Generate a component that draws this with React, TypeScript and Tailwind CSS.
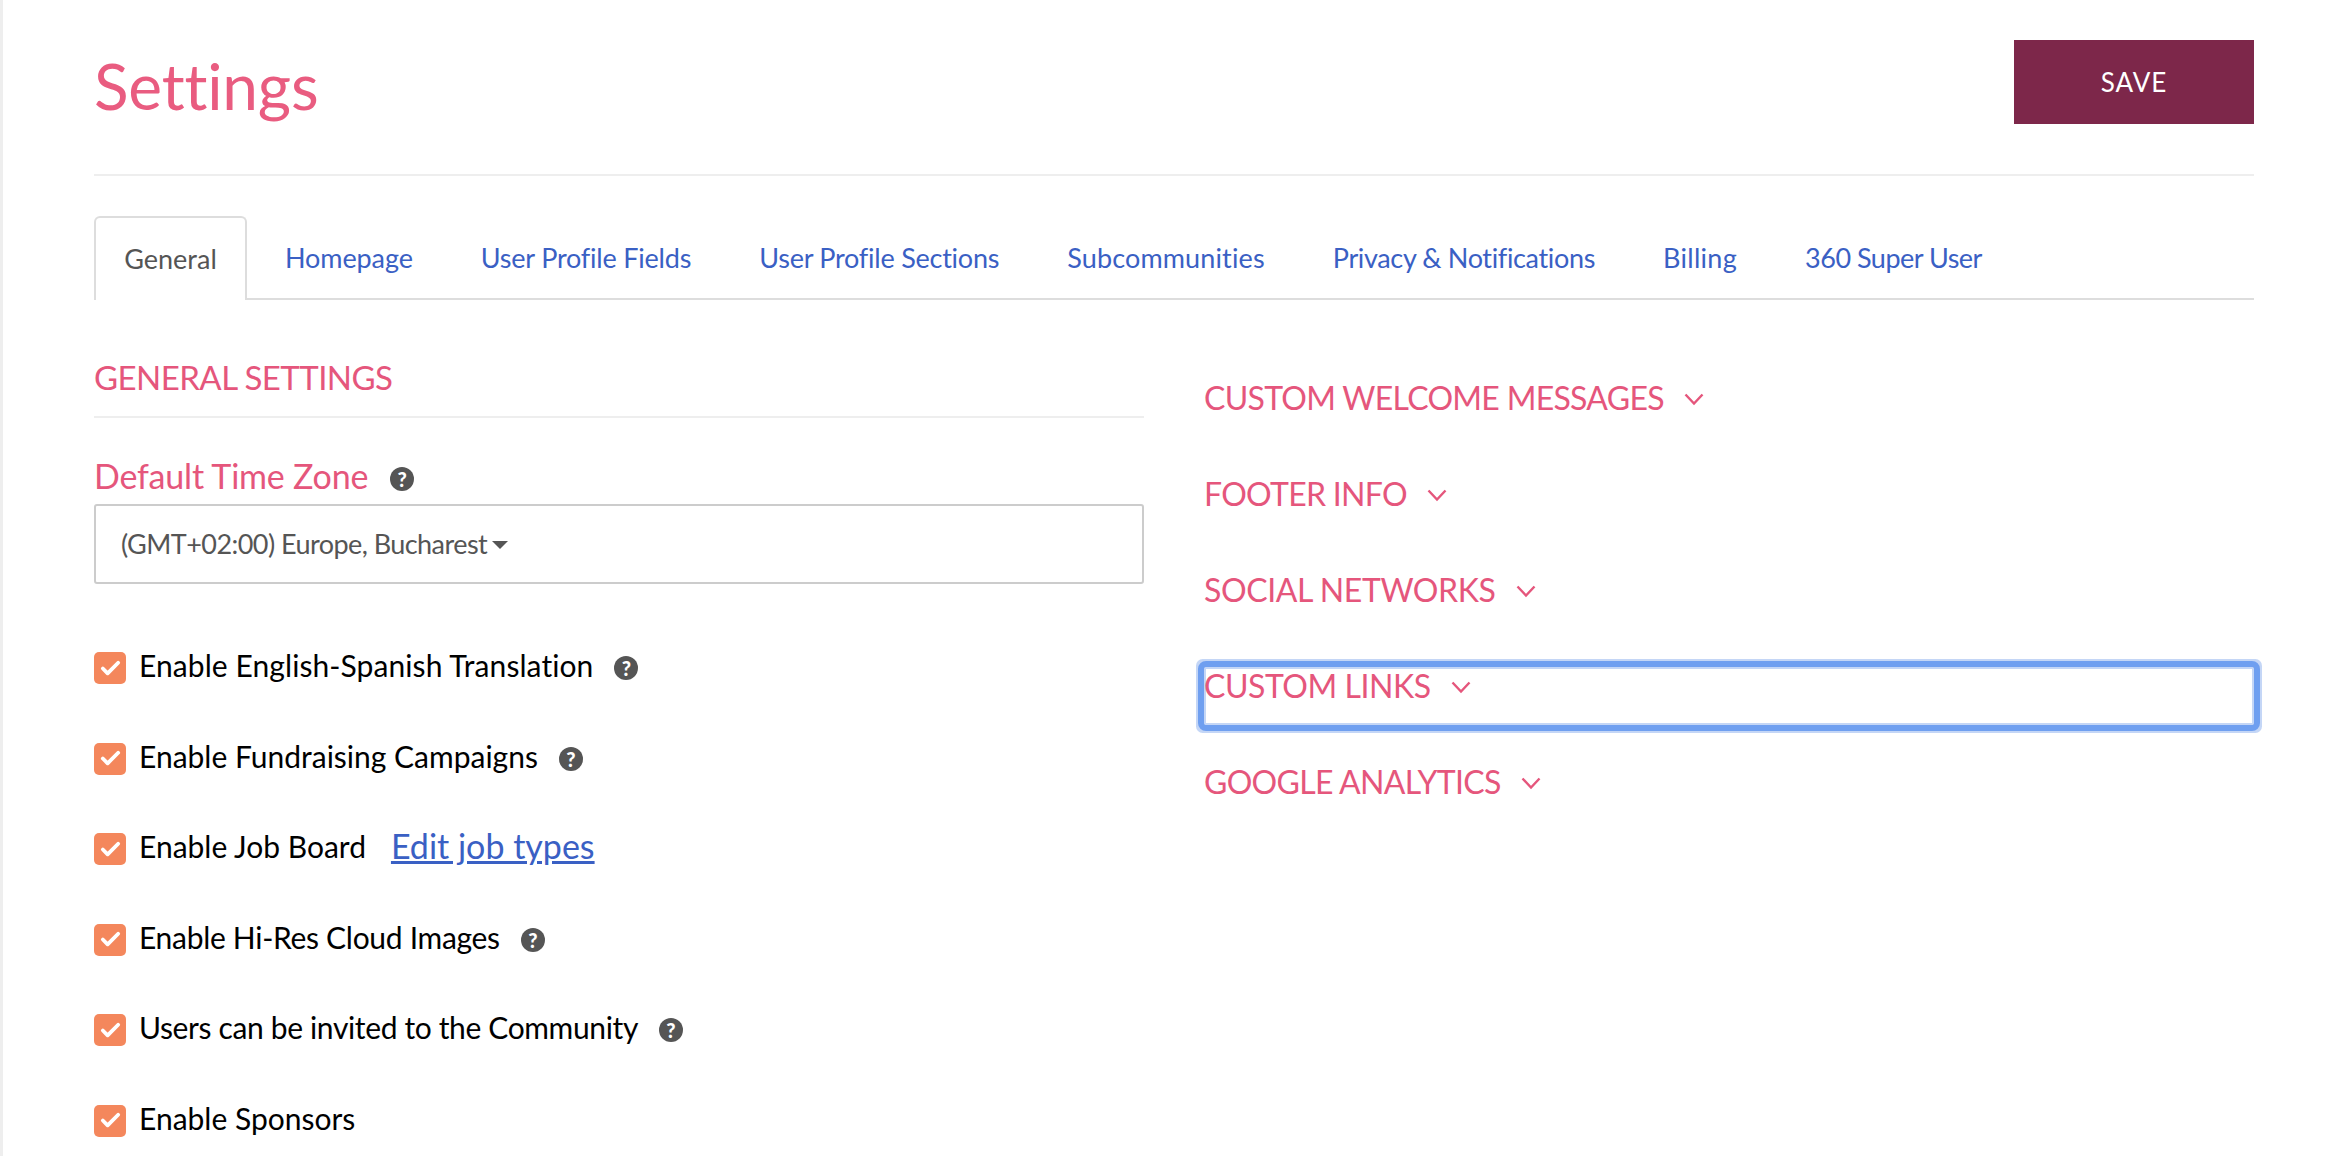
import { Check } from "lucide-react";

const tabs = [
	{ label: "Homepage", className: "ml-[38px] tracking-[-0.1px]" },
	{ label: "User Profile Fields", className: "ml-[68px] tracking-[-0.2px]" },
	{ label: "User Profile Sections", className: "ml-[68px] tracking-[-0.24px]" },
	{ label: "Subcommunities", className: "ml-[68px] tracking-[0.14px]" },
	{ label: "Privacy & Notifications", className: "ml-[68px] tracking-[-0.35px]" },
	{ label: "Billing", className: "ml-[68px] tracking-[0.3px]" },
	{ label: "360 Super User", className: "ml-[68px] tracking-[-0.5px]" },
];

const Help = ({ className = "" }: { className?: string }) => (
	<span className={`inline-flex h-[24px] w-[24px] shrink-0 items-center justify-center rounded-full bg-[#555555] text-[20px] leading-none font-black text-white ${className}`}>
		?
	</span>
);

const Row = ({ label, help, link, tracking = "" }: { label: string; help?: boolean; link?: string; tracking?: string }) => (
	<div className="flex h-[32px] items-center">
		<span className="flex h-[32px] w-[32px] shrink-0 items-center justify-center rounded-[5px] bg-[#f4875c]">
			<Check size={23} strokeWidth={4} color="#ffffff" />
		</span>
		<span className={`-mt-[5px] ml-[13px] text-[30px] whitespace-nowrap text-black ${tracking}`}>{label}</span>
		{help && <Help className="ml-[21px]" />}
		{link && <a className="-mt-[7px] ml-[25px] text-[34px] whitespace-nowrap text-[#3a60c4] underline">{link}</a>}
	</div>
);

const Accordion = ({ label, focused, tracking = "tracking-[-0.7px]" }: { label: string; focused?: boolean; tracking?: string }) => (
	<div className={`h-[58px] ${focused ? "rounded-[2px] outline-[6px] outline-[#6f9ff0] shadow-[0_0_0_8px_#c4d6f6,inset_0_0_0_2px_#c4d6f6]" : ""}`}>
		<div className="flex h-[40px] items-center">
			<span className={`-mt-[2px] text-[32px] leading-[40px] whitespace-nowrap text-[#e5567c] ${tracking}`}>{label}</span>
			<svg width="20" height="13" viewBox="0 0 20 13" fill="none" className="ml-[20px] shrink-0">
				<polyline points="1.5,1.5 10,10.5 18.5,1.5" stroke="#e5567c" strokeWidth="2.4" />
			</svg>
		</div>
	</div>
);

const App = () => {
	return (
		<div className="h-[1156px] overflow-hidden border-l-[3px] border-[#eeeeee] bg-white pr-[88px] pl-[91px] font-['Lato',sans-serif] [font-variant-ligatures:none]">
			<div className="flex h-[176px] items-start justify-between border-b-2 border-[#eeeeee] pt-[40px]">
				<h1 className="mt-[10px] text-[64px] leading-[72px] tracking-[-0.2px] text-[#e95c80]">Settings</h1>
				<button className="h-[84px] w-[240px] bg-[#7d274a] text-[26px] tracking-[1px] text-white">SAVE</button>
			</div>

			<div className="mt-[40px] flex h-[84px] items-stretch border-b-2 border-[#dddddd] text-[27px]">
				<div className="flex h-[84px] w-[153px] items-center justify-center rounded-t-[6px] border-2 border-b-0 border-[#dddddd] bg-white text-[#555555]">
					General
				</div>
				{tabs.map((tab) => (
					<a key={tab.label} className={`${tab.className} flex items-center pt-[2px] whitespace-nowrap text-[#3a60c4]`}>
						{tab.label}
					</a>
				))}
			</div>

			<div className="flex">
				<div className="w-[1050px] shrink-0">
					<div className="mt-[55px] border-b-2 border-[#eeeeee] pb-[17px] text-[33px] leading-[44px] tracking-[-0.55px] text-[#e5567c]">GENERAL SETTINGS</div>
					<div className="mt-[36px] flex items-center">
						<span className="text-[34px] leading-[44px] tracking-[-0.2px] text-[#e5567c]">Default Time Zone</span>
						<Help className="mt-[6px] ml-[22px]" />
					</div>
					<div className="mt-[6px] flex h-[80px] items-center rounded-[3px] border-2 border-[#cccccc] pl-[25px] text-[27px] tracking-[-0.55px] text-[#555555]">
						(GMT+02:00) Europe, Bucharest
						<span className="mt-[2px] ml-[5px] h-0 w-0 border-x-[8px] border-t-[8px] border-x-transparent border-t-[#555555]" />
					</div>
					<div className="mt-[68px] flex flex-col gap-[58.5px]">
						<Row label="Enable English-Spanish Translation" help tracking="tracking-[0.08px]" />
						<Row label="Enable Fundraising Campaigns" help />
						<Row label="Enable Job Board" link="Edit job types" />
						<Row label="Enable Hi-Res Cloud Images" help tracking="tracking-[-0.3px]" />
						<Row label="Users can be invited to the Community" help tracking="tracking-[-0.36px]" />
						<Row label="Enable Sponsors" />
					</div>
				</div>
				<div className="ml-[60px] flex-1 pt-[79px]">
					<div className="flex flex-col gap-[38px]">
						<Accordion label="CUSTOM WELCOME MESSAGES" />
						<Accordion label="FOOTER INFO" />
						<Accordion label="SOCIAL NETWORKS" tracking="tracking-[-0.4px]" />
						<Accordion label="CUSTOM LINKS" focused tracking="tracking-[-0.45px]" />
						<Accordion label="GOOGLE ANALYTICS" />
					</div>
				</div>
			</div>
		</div>
	);
};

export default App;
